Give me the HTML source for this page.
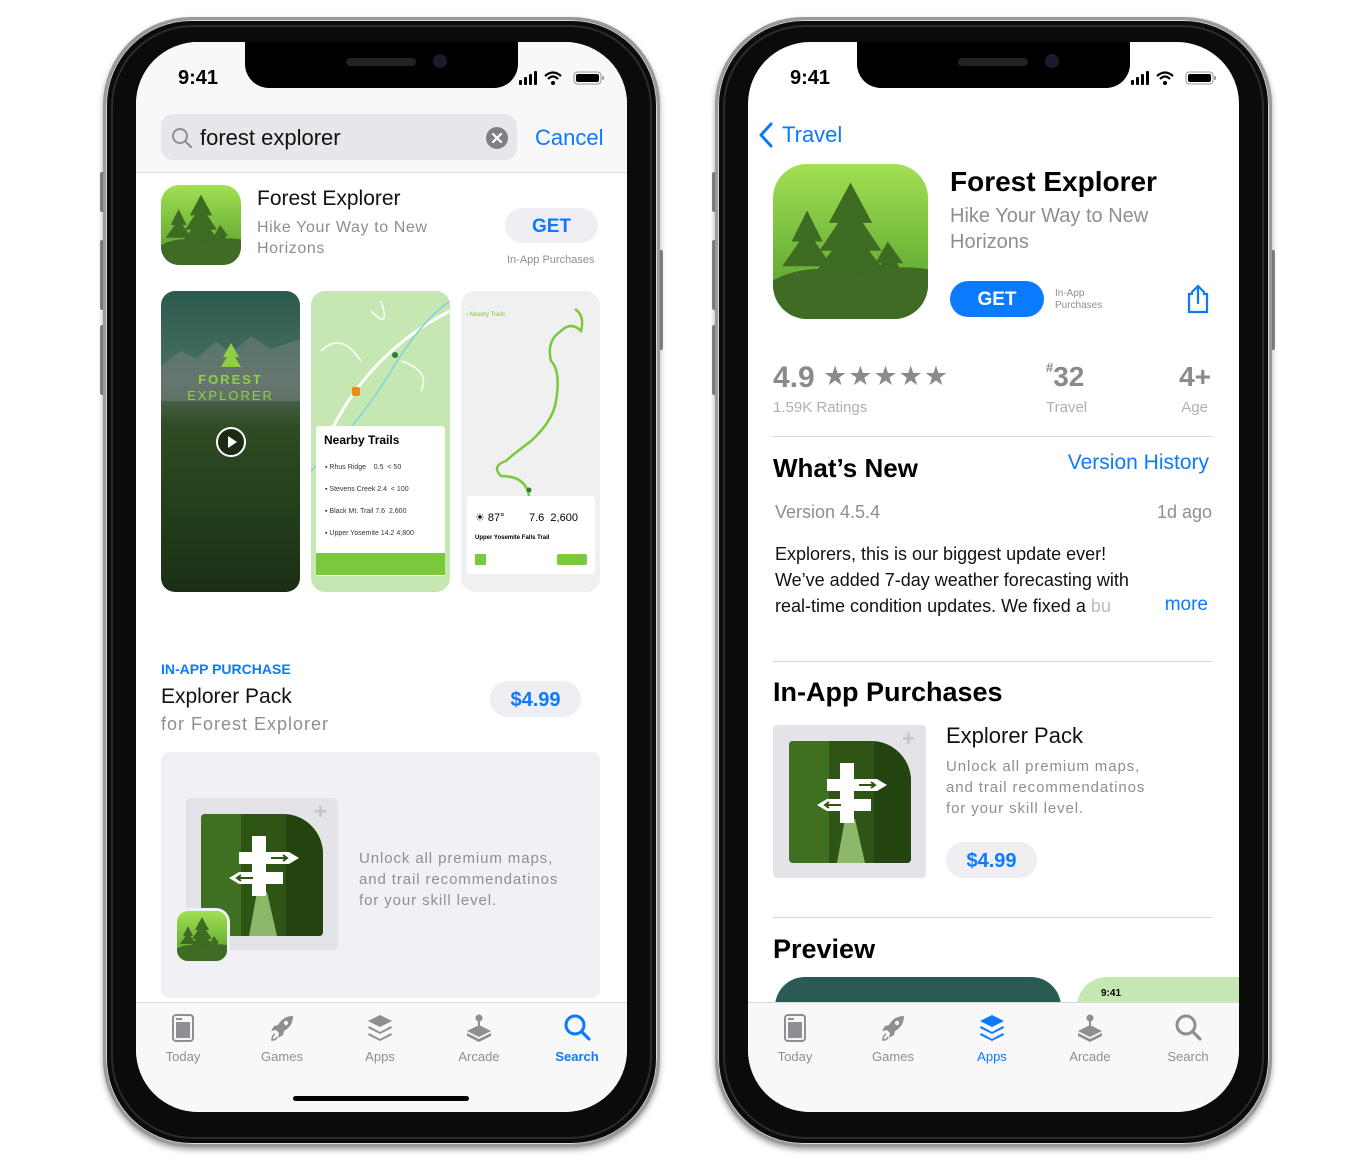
<!DOCTYPE html>
<html><head><meta charset="utf-8">
<style>
*{margin:0;padding:0;box-sizing:border-box}
body{width:1366px;height:1164px;background:#fff;position:relative;overflow:hidden;font-family:"Liberation Sans",sans-serif}
.a{position:absolute}
.t{position:absolute;white-space:nowrap;line-height:1.15}
.frame{position:absolute;top:17px;width:557px;height:1130px;border-radius:88px;background:#0b0b0b;border:3px solid #9a9a9a;box-shadow:0 0 0 1px #d8d8d8 inset,0 3px 6px rgba(0,0,0,.35)}
.frame:after{content:"";position:absolute;left:5px;top:5px;right:5px;bottom:5px;border-radius:82px;border:2px solid #2b2b2b}
.screen{position:absolute;top:42px;width:491px;height:1070px;border-radius:62px;background:#fff;overflow:hidden}
.notch{position:absolute;top:42px;width:273px;height:46px;background:#000;border-radius:0 0 24px 24px}
.btn{position:absolute;width:4px;background:#8a8a8a;border-radius:2px}
.gray{color:#8e8e93}
.blue{color:#0a7aff}
.pill{position:absolute;border-radius:20px;background:#eeeef3;color:#0a7aff;font-weight:bold;text-align:center}
.tab{position:absolute;top:1004px;width:98px;text-align:center;font-size:13px;color:#8e8e93}
.tab svg{display:block;margin:9px auto 6px}
</style></head><body>
<svg width="0" height="0" style="position:absolute">
<defs>
<linearGradient id="ig" x1="0" y1="0" x2="0" y2="1"><stop offset="0" stop-color="#a2e053"/><stop offset="1" stop-color="#4f9a2a"/></linearGradient>
<symbol id="appicon" viewBox="0 0 100 100">
<rect width="100" height="100" fill="url(#ig)"/>
<path fill="#3e6b22" d="M50 12 L36 38 L42 38 L30 56 L38 56 L24 74 L47 74 L47 86 L53 86 L53 74 L76 74 L62 56 L70 56 L58 38 L64 38 Z"/>
<path fill="#3e6b22" d="M22 30 L12 50 L17 50 L6 66 L38 66 L27 50 L32 50 Z"/>
<path fill="#3e6b22" d="M74 50 L66 64 L70 64 L62 78 L88 78 L80 64 L84 64 Z"/>
<path fill="#3f6b24" d="M0 75 Q25 62 55 72 Q80 64 100 68 L100 100 L0 100 Z"/>
</symbol>
<symbol id="sign" viewBox="0 0 122 122">
<rect width="122" height="122" fill="#2f5516"/>
<rect x="0" y="0" width="40" height="122" fill="#3f6f20"/>
<rect x="85" y="0" width="37" height="122" fill="#24440f"/>
<path d="M48 122 L56 78 L66 78 L76 122Z" fill="#8db86a"/>
<rect x="51" y="22" width="14" height="60" fill="#fff"/>
<path d="M38 38 H88 L98 44 L88 50 H38Z" fill="#fff"/>
<path d="M38 58 H82 V70 H38 L28 64Z" fill="#fff"/>
<path d="M70 44 H86 M82 41 L86 44 L82 47" stroke="#2f5516" stroke-width="2" fill="none"/>
<path d="M52 64 H36 M40 61 L36 64 L40 67" stroke="#2f5516" stroke-width="2" fill="none"/>
</symbol>
<symbol id="sb" viewBox="0 0 90 16">
<rect x="0" y="10" width="3" height="5" rx="1" fill="#000"/><rect x="5" y="7" width="3" height="8" rx="1" fill="#000"/><rect x="10" y="4" width="3" height="11" rx="1" fill="#000"/><rect x="15" y="1" width="3" height="14" rx="1" fill="#000"/>
<path d="M26 6 Q34 -1 42 6 M29 9 Q34 4 39 9" stroke="#000" stroke-width="2.2" fill="none"/><circle cx="34" cy="13" r="2" fill="#000"/>
<rect x="55" y="2" width="27" height="12" rx="3.5" fill="none" stroke="#999" stroke-width="1"/><rect x="57" y="4" width="23" height="8" rx="2" fill="#000"/><rect x="83" y="6" width="2" height="4" rx="1" fill="#999"/>
</symbol>
<symbol id="i-today" viewBox="0 0 30 30"><rect x="5" y="2" width="20" height="26" rx="3" fill="none" stroke="currentColor" stroke-width="2"/><rect x="8" y="9" width="14" height="16" fill="currentColor"/><rect x="8" y="5" width="6" height="2" fill="currentColor"/></symbol>
<symbol id="i-games" viewBox="0 0 30 30"><path d="M26 3 Q16 3 11 12 L7 13 L4 18 L9 17 L12 20 L11 25 L16 22 L17 18 Q26 13 26 3Z" fill="currentColor"/><circle cx="19" cy="10" r="2.2" fill="#f8f8f8"/><path d="M8 21 Q5 23 5 27 Q9 27 10 24" fill="none" stroke="currentColor" stroke-width="1.6"/></symbol>
<symbol id="i-apps" viewBox="0 0 30 30"><path d="M15 2 L27 8 L15 14 L3 8Z" fill="currentColor"/><path d="M4 13 L15 19 L26 13 L27 15 L15 21 L3 15Z" fill="currentColor"/><path d="M4 20 L15 26 L26 20 L27 22 L15 28 L3 22Z" fill="currentColor"/></symbol>
<symbol id="i-arcade" viewBox="0 0 30 30"><circle cx="15" cy="5" r="3.5" fill="currentColor"/><rect x="14" y="8" width="2" height="9" fill="currentColor"/><path d="M3 18 L15 12 L27 18 L15 24Z" fill="currentColor"/><path d="M3 20 L15 26 L27 20 L27 23 L15 29 L3 23Z" fill="currentColor"/></symbol>
<symbol id="i-search" viewBox="0 0 30 30"><circle cx="13" cy="12" r="9" fill="none" stroke="currentColor" stroke-width="3"/><path d="M19.5 18.5 L27 26" stroke="currentColor" stroke-width="3.2" stroke-linecap="round"/></symbol>
</defs></svg>

<!-- ============ LEFT PHONE ============ -->
<div class="btn" style="left:100px;top:172px;height:40px"></div>
<div class="btn" style="left:100px;top:240px;height:70px"></div>
<div class="btn" style="left:100px;top:325px;height:70px"></div>
<div class="btn" style="left:659px;top:250px;height:100px"></div>
<div class="frame" style="left:103px"></div>
<div class="screen" style="left:136px">
  <div class="a" style="left:0;top:0;width:491px;height:131px;background:#f8f8f8;border-bottom:1px solid #d9d9dc"></div>
  <div class="a" style="left:0;top:960px;width:491px;height:110px;background:#f8f8f8;border-top:1px solid #d9d9dc"></div>
</div>
<div class="notch" style="left:245px"></div>
<div class="a" style="left:346px;top:58px;width:70px;height:8px;border-radius:4px;background:#222"></div>
<div class="a" style="left:433px;top:54px;width:14px;height:14px;border-radius:7px;background:#1a1a2a"></div>
<div class="t" style="left:178px;top:67px;font-size:20px;font-weight:bold">9:41</div>
<svg class="a" style="left:519px;top:70px" width="90" height="16"><use href="#sb"/></svg>

<div class="a" style="left:161px;top:114px;width:356px;height:46px;border-radius:12px;background:#e6e6eb"></div>
<svg class="a" style="left:170px;top:126px" width="24" height="24" viewBox="0 0 24 24"><circle cx="10" cy="10" r="7" fill="none" stroke="#8e8e93" stroke-width="2"/><path d="M15 15 L21 21" stroke="#8e8e93" stroke-width="2.2" stroke-linecap="round"/></svg>
<div class="t" style="left:200px;top:125px;font-size:22px;color:#111">forest explorer</div>
<div class="a" style="left:486px;top:127px;width:22px;height:22px;border-radius:11px;background:#7f7f84"></div>
<svg class="a" style="left:486px;top:127px" width="22" height="22"><path d="M7 7 L15 15 M15 7 L7 15" stroke="#fff" stroke-width="2.2" stroke-linecap="round"/></svg>
<div class="t blue" style="left:535px;top:125px;font-size:22px">Cancel</div>

<svg class="a" style="left:161px;top:185px;border-radius:18px" width="80" height="80"><use href="#appicon"/></svg>
<div class="t" style="left:257px;top:187px;font-size:21px;color:#111">Forest Explorer</div>
<div class="t gray" style="left:257px;top:217px;font-size:16px;letter-spacing:.6px;line-height:21px">Hike Your Way to New<br>Horizons</div>
<div class="pill" style="left:505px;top:208px;width:93px;height:35px;font-size:19px;line-height:37px">GET</div>
<div class="t gray" style="left:507px;top:254px;font-size:11px">In-App Purchases</div>

<!-- screenshots -->
<div class="a" style="left:161px;top:291px;width:139px;height:301px;border-radius:14px;overflow:hidden;background:linear-gradient(#2c5a4f 0%,#3f6a5a 20%,#5b6e63 30%,#2f4b24 45%,#24401c 70%,#1b2e15 100%)">
  <svg class="a" style="left:0;top:0" width="139" height="301"><path d="M0 75 L20 60 L35 68 L55 50 L70 62 L90 45 L110 58 L139 48 L139 110 L0 110Z" fill="#6f7d78" opacity=".6"/><path d="M70 52 L62 66 L66 66 L60 76 L80 76 L74 66 L78 66Z" fill="#8fd043"/></svg>
  <div class="t" style="left:0;width:139px;text-align:center;top:82px;font-size:13px;letter-spacing:2px;color:#8fd043;font-weight:bold">FOREST</div>
  <div class="t" style="left:0;width:139px;text-align:center;top:98px;font-size:13px;letter-spacing:2px;color:#8fd043">EXPLORER</div>
  <div class="a" style="left:55px;top:136px;width:30px;height:30px;border-radius:15px;border:2px solid #fff;background:rgba(0,0,0,.4)"></div>
  <svg class="a" style="left:55px;top:136px" width="30" height="30"><path d="M12 9 L21 15 L12 21Z" fill="#fff"/></svg>
</div>
<div class="a" style="left:311px;top:291px;width:139px;height:301px;border-radius:14px;overflow:hidden;background:#c5e7b1">
  <svg class="a" style="left:0;top:0" width="139" height="301"><path d="M20 140 Q40 100 70 70 Q100 40 139 20" stroke="#fff" stroke-width="3" fill="none"/><path d="M0 180 Q50 130 80 80 Q110 30 139 10" stroke="#7fd0e0" stroke-width="1.5" fill="none"/><path d="M10 60 Q30 40 50 70 M60 20 Q80 40 70 10 M90 70 Q120 80 110 100" stroke="#fff" stroke-width="1.5" fill="none"/><circle cx="84" cy="64" r="3" fill="#2e7d32"/><rect x="41" y="96" width="8" height="9" rx="2" fill="#f28a1b"/></svg>
  <div class="a" style="left:5px;top:135px;width:129px;height:150px;background:#fff;border-radius:3px"></div>
  <div class="t" style="left:13px;top:143px;font-size:12px;font-weight:bold">Nearby Trails</div>
  <div class="t" style="left:14px;top:166px;font-size:7px;line-height:22px;color:#333">▪ Rhus Ridge&nbsp;&nbsp;&nbsp;&nbsp;0.5 &nbsp;&lt; 50<br>▪ Stevens Creek&nbsp;2.4 &nbsp;&lt; 100<br>▪ Black Mt. Trail&nbsp;7.6 &nbsp;2,600<br>▪ Upper Yosemite&nbsp;14.2 4,800</div>
  <div class="a" style="left:5px;top:262px;width:129px;height:22px;background:#7cc83c"></div>
</div>
<div class="a" style="left:461px;top:291px;width:139px;height:301px;border-radius:14px;overflow:hidden;background:#f0f0f0">
  <svg class="a" style="left:0;top:0" width="139" height="301"><path d="M114 18 Q124 25 120 40 Q110 30 100 40 Q85 50 90 70 Q100 80 95 110 Q92 130 70 150 Q50 165 45 170 Q30 175 40 185 Q65 185 68 205" stroke="#7cc83c" stroke-width="2.5" fill="none"/><circle cx="68" cy="199" r="2.5" fill="#2e7d32"/></svg>
  <div class="t" style="left:5px;top:21px;font-size:6px;color:#7cc83c">‹ Nearby Trails</div>
  <div class="a" style="left:6px;top:205px;width:128px;height:78px;background:#fff;border-radius:3px"></div>
  <div class="t" style="left:14px;top:221px;font-size:11px">☀ 87°&nbsp;&nbsp;&nbsp;&nbsp;&nbsp;&nbsp;&nbsp;&nbsp;7.6 &nbsp;2,600</div>
  <div class="t" style="left:14px;top:244px;font-size:6px;font-weight:bold">Upper Yosemite Falls Trail</div>
  <div class="a" style="left:96px;top:263px;width:30px;height:11px;background:#7cc83c;border-radius:2px"></div>
  <div class="a" style="left:14px;top:263px;width:11px;height:11px;background:#7cc83c"></div>
</div>

<div class="t blue" style="left:161px;top:661px;font-size:14px;font-weight:bold">IN-APP PURCHASE</div>
<div class="t" style="left:161px;top:685px;font-size:21px;color:#111">Explorer Pack</div>
<div class="t gray" style="left:161px;top:714px;font-size:18px;letter-spacing:1px">for Forest Explorer</div>
<div class="pill" style="left:490px;top:681px;width:91px;height:36px;font-size:20px;line-height:38px">$4.99</div>
<div class="a" style="left:161px;top:752px;width:439px;height:246px;border-radius:8px;background:#f0f0f5"></div>
<div class="a" style="left:186px;top:798px;width:152px;height:152px;border-radius:4px;background:#e4e4e8"></div>
<div class="t" style="left:314px;top:799px;font-size:22px;color:#c4c4c8;font-weight:bold">+</div>
<svg class="a" style="left:201px;top:814px;border-radius:4px 40px 4px 4px" width="122" height="122"><use href="#sign"/></svg>
<svg class="a" style="left:177px;top:911px;border-radius:11px;box-shadow:0 0 0 3px #f0f0f5" width="50" height="50"><use href="#appicon"/></svg>
<div class="t gray" style="left:359px;top:848px;font-size:15px;line-height:21px;letter-spacing:.9px">Unlock all premium maps,<br>and trail recommendatinos<br>for your skill level.</div>

<div class="tab" style="left:134px;color:#8e8e93"><svg width="30" height="30"><use href="#i-today"/></svg>Today</div>
<div class="tab" style="left:233px"><svg width="30" height="30"><use href="#i-games"/></svg>Games</div>
<div class="tab" style="left:331px"><svg width="30" height="30"><use href="#i-apps"/></svg>Apps</div>
<div class="tab" style="left:430px"><svg width="30" height="30"><use href="#i-arcade"/></svg>Arcade</div>
<div class="tab" style="left:528px;color:#0a7aff;font-weight:bold"><svg width="30" height="30"><use href="#i-search"/></svg>Search</div>
<div class="a" style="left:293px;top:1096px;width:176px;height:5px;border-radius:3px;background:#000"></div>

<!-- ============ RIGHT PHONE ============ -->
<div class="btn" style="left:712px;top:172px;height:40px"></div>
<div class="btn" style="left:712px;top:240px;height:70px"></div>
<div class="btn" style="left:712px;top:325px;height:70px"></div>
<div class="btn" style="left:1271px;top:250px;height:100px"></div>
<div class="frame" style="left:715px"></div>
<div class="screen" style="left:748px">
  <div class="a" style="left:27px;top:935px;width:286px;height:40px;border-radius:30px 30px 0 0;background:#2b5a52"></div>
  <div class="a" style="left:329px;top:935px;width:200px;height:40px;border-radius:30px 0 0 0;background:#c5e7b1"></div>
  <div class="t" style="left:353px;top:946px;font-size:10px;font-weight:bold">9:41</div>
  <div class="a" style="left:0;top:960px;width:491px;height:110px;background:#f8f8f8;border-top:1px solid #d9d9dc"></div>
</div>
<div class="notch" style="left:857px"></div>
<div class="a" style="left:958px;top:58px;width:70px;height:8px;border-radius:4px;background:#222"></div>
<div class="a" style="left:1045px;top:54px;width:14px;height:14px;border-radius:7px;background:#1a1a2a"></div>
<div class="t" style="left:790px;top:67px;font-size:20px;font-weight:bold">9:41</div>
<svg class="a" style="left:1131px;top:70px" width="90" height="16"><use href="#sb"/></svg>

<svg class="a" style="left:758px;top:121px" width="16" height="28"><path d="M13 3 L3 14 L13 25" stroke="#0a7aff" stroke-width="3" fill="none" stroke-linecap="round" stroke-linejoin="round"/></svg>
<div class="t blue" style="left:782px;top:122px;font-size:22px">Travel</div>

<svg class="a" style="left:773px;top:164px;border-radius:34px" width="155" height="155"><use href="#appicon"/></svg>
<div class="t" style="left:950px;top:166px;font-size:28px;font-weight:bold;color:#000">Forest Explorer</div>
<div class="t gray" style="left:950px;top:203px;font-size:20px;line-height:26px">Hike Your Way to New<br>Horizons</div>
<div class="a" style="left:950px;top:281px;width:94px;height:36px;border-radius:18px;background:#0a7aff;color:#fff;font-weight:bold;font-size:19px;line-height:37px;text-align:center">GET</div>
<div class="t gray" style="left:1055px;top:288px;font-size:10px;line-height:12px">In-App<br>Purchases</div>
<svg class="a" style="left:1184px;top:283px" width="28" height="32"><path d="M9 11 H5 V29 H23 V11 H19" stroke="#0a7aff" stroke-width="2.2" fill="none"/><path d="M14 20 V3 M8 9 L14 3 L20 9" stroke="#0a7aff" stroke-width="2.2" fill="none" stroke-linecap="round"/></svg>

<div class="t gray" style="left:773px;top:361px;font-size:30px;font-weight:bold;color:#8a8a8e">4.9</div>
<div class="t" style="left:823px;top:361px;font-size:27px;color:#8a8a8e;letter-spacing:1px">★★★★★</div>
<div class="t" style="left:773px;top:399px;font-size:15px;color:#b0b0b4">1.59K Ratings</div>
<div class="t" style="left:1046px;top:361px;font-size:28px;color:#8a8a8e;font-weight:bold"><span style="font-size:13px;vertical-align:top">#</span>32</div>
<div class="t" style="left:1046px;top:399px;font-size:15px;color:#b0b0b4">Travel</div>
<div class="t" style="right:155px;top:361px;font-size:28px;color:#8a8a8e;font-weight:bold">4+</div>
<div class="t" style="right:158px;top:399px;font-size:15px;color:#b0b0b4">Age</div>
<div class="a" style="left:773px;top:436px;width:440px;height:1px;background:#d9d9dc"></div>

<div class="t" style="left:773px;top:454px;font-size:26px;font-weight:bold">What’s New</div>
<div class="t blue" style="right:157px;top:451px;font-size:21px">Version History</div>
<div class="t gray" style="left:775px;top:502px;font-size:18px">Version 4.5.4</div>
<div class="t gray" style="right:154px;top:502px;font-size:18px">1d ago</div>
<div class="t" style="left:775px;top:541px;font-size:18px;line-height:26px;color:#111">Explorers, this is our biggest update ever!<br>We’ve added 7-day weather forecasting with<br>real-time condition updates. We fixed a <span style="color:#bbb">bu</span></div>
<div class="t blue" style="right:158px;top:594px;font-size:19px">more</div>
<div class="a" style="left:773px;top:661px;width:440px;height:1px;background:#d9d9dc"></div>

<div class="t" style="left:773px;top:677px;font-size:27px;font-weight:bold">In-App Purchases</div>
<div class="a" style="left:773px;top:725px;width:153px;height:153px;border-radius:4px;background:#e4e4e8"></div>
<div class="t" style="left:902px;top:726px;font-size:22px;color:#c4c4c8;font-weight:bold">+</div>
<svg class="a" style="left:789px;top:741px;border-radius:4px 40px 4px 4px" width="122" height="122"><use href="#sign"/></svg>
<div class="t" style="left:946px;top:723px;font-size:22px;color:#111">Explorer Pack</div>
<div class="t gray" style="left:946px;top:756px;font-size:15px;line-height:21px;letter-spacing:.9px">Unlock all premium maps,<br>and trail recommendatinos<br>for your skill level.</div>
<div class="pill" style="left:946px;top:842px;width:91px;height:36px;font-size:20px;line-height:38px">$4.99</div>
<div class="a" style="left:773px;top:917px;width:440px;height:1px;background:#d9d9dc"></div>
<div class="t" style="left:773px;top:934px;font-size:27px;font-weight:bold">Preview</div>

<div class="tab" style="left:746px"><svg width="30" height="30"><use href="#i-today"/></svg>Today</div>
<div class="tab" style="left:844px"><svg width="30" height="30"><use href="#i-games"/></svg>Games</div>
<div class="tab" style="left:943px;color:#0a7aff"><svg width="30" height="30"><use href="#i-apps"/></svg>Apps</div>
<div class="tab" style="left:1041px"><svg width="30" height="30"><use href="#i-arcade"/></svg>Arcade</div>
<div class="tab" style="left:1139px"><svg width="30" height="30"><use href="#i-search"/></svg>Search</div>
</body></html>
